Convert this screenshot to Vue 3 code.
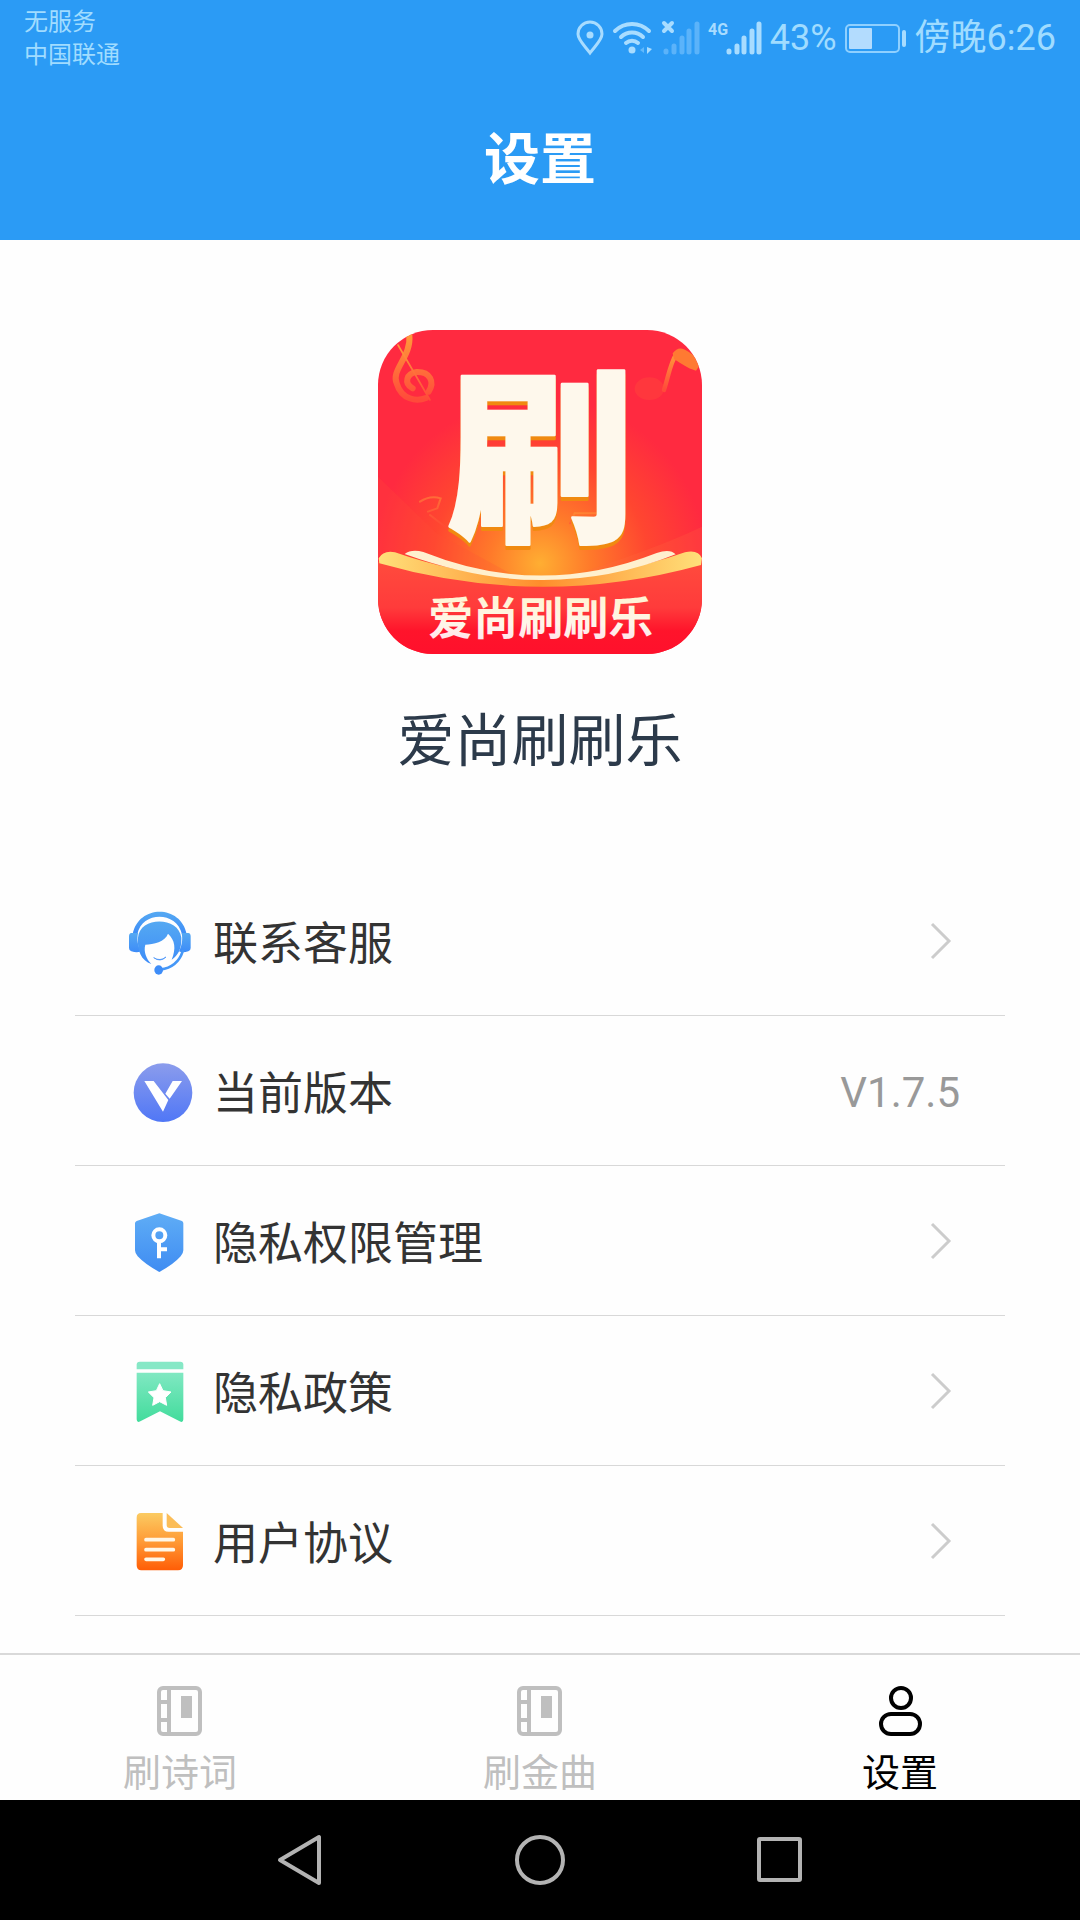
<script setup>
import { ref } from 'vue'

const menu = [
  { id: 'service', label: '联系客服' },
  { id: 'version', label: '当前版本', value: 'V1.7.5' },
  { id: 'permission', label: '隐私权限管理' },
  { id: 'privacy', label: '隐私政策' },
  { id: 'terms', label: '用户协议' }
]

const tabs = [
  { id: 'poem', label: '刷诗词', icon: 'book' },
  { id: 'song', label: '刷金曲', icon: 'book' },
  { id: 'settings', label: '设置', icon: 'user' }
]

const current = ref('settings')
</script>

<template>
  <div class="page">
    <header class="header">
      <div class="status">
        <div class="carrier">
          <span>无服务</span>
          <span>中国联通</span>
        </div>
        <div class="indicators">
          <svg width="28" height="36" viewBox="0 0 28 36" fill="none" aria-hidden="true">
            <path d="M14 33C9 26 2 20 2 14a12 12 0 0 1 24 0c0 6-7 12-12 19Z" stroke="#a8dcff" stroke-width="3" />
            <circle cx="14" cy="15" r="3.5" fill="#a8dcff" />
          </svg>
          <svg width="42" height="36" viewBox="0 0 42 36" fill="none" aria-hidden="true">
            <g stroke="#a8dcff" stroke-width="4" stroke-linecap="round">
              <path d="M3 11a24 24 0 0 1 34 0" />
              <path d="M9 17a16 16 0 0 1 22 0" />
              <path d="M14 23a9 9 0 0 1 12 0" />
            </g>
            <circle cx="20" cy="30" r="3.5" fill="#a8dcff" />
            <path d="M35 27l5 2-5 5Z" fill="#a8dcff" />
            <path d="M32 27v6l-4-3Z" fill="#62b9fb" />
          </svg>
          <svg width="38" height="36" viewBox="0 0 38 36" fill="none" aria-hidden="true">
            <path d="M2 3l8 8m0-8l-8 8" stroke="#a8dcff" stroke-width="4" stroke-linecap="round" />
            <g stroke="#5bb3fa" stroke-width="5" stroke-linecap="round">
              <path d="M4 31v1M12 26v6M20 18v14M27 11v21M35 4v28" />
            </g>
          </svg>
          <svg width="54" height="36" viewBox="0 0 54 36" fill="none" aria-hidden="true">
            <text class="net" x="0" y="15">4G</text>
            <g stroke="#a8dcff" stroke-width="5" stroke-linecap="round">
              <path d="M21 31v1M29 26v6M36 18v14M44 11v21M51 4v28" />
            </g>
          </svg>
          <span>43%</span>
          <svg width="62" height="36" viewBox="0 0 62 36" fill="none" aria-hidden="true">
            <rect x="1" y="5" width="53" height="27" rx="4" stroke="#8fd0ff" stroke-width="2" />
            <rect x="4" y="8" width="23" height="21" rx="1" fill="#b3dcfe" />
            <rect x="57" y="10" width="4" height="17" rx="2" fill="#a8dcff" />
          </svg>
          <span>傍晚6:26</span>
        </div>
      </div>
      <h1 class="title">设置</h1>
    </header>

    <main class="main">
      <svg class="logo" viewBox="24 30 972 972" role="img" aria-label="爱尚刷刷乐">
        <defs>
          <clipPath id="tile"><rect x="24" y="30" width="972" height="972" rx="165" /></clipPath>
          <radialGradient id="glow" gradientUnits="userSpaceOnUse" cx="510" cy="730" r="500">
            <stop offset="0" stop-color="#ffae32" />
            <stop offset=".3" stop-color="#ff7a2a" />
            <stop offset=".65" stop-color="#ff4630" />
            <stop offset="1" stop-color="#ff2a40" />
          </radialGradient>
          <linearGradient id="base" x1="0" y1="0" x2="0" y2="1">
            <stop offset="0" stop-color="#ff4b3d" />
            <stop offset=".5" stop-color="#ff3b3b" />
            <stop offset=".75" stop-color="#ff142b" />
            <stop offset="1" stop-color="#ff102c" />
          </linearGradient>
          <linearGradient id="page" x1="0" x2="1">
            <stop offset="0" stop-color="#ffe07a" />
            <stop offset=".5" stop-color="#ff8d2c" />
            <stop offset="1" stop-color="#ffe07a" />
          </linearGradient>
          <linearGradient id="note" x1="0" y1="0" x2="0" y2="1">
            <stop offset="0" stop-color="#ff9a3a" />
            <stop offset="1" stop-color="#ff4a3a" />
          </linearGradient>
          <linearGradient id="cream" x1="0" y1="0" x2="0" y2="1">
            <stop offset="0" stop-color="#fff3cf" />
            <stop offset=".6" stop-color="#fff6ea" />
            <stop offset="1" stop-color="#ffdcec" />
          </linearGradient>
        </defs>
        <g clip-path="url(#tile)">
          <rect x="24" y="30" width="972" height="972" fill="url(#glow)" />
          <path d="M24 470L200 640 420 760H24Z" fill="#ff5038" opacity=".2" />
          <path d="M996 620Q850 690 590 770H996Z" fill="#ff7040" opacity=".2" />
          <g fill="none" stroke="url(#note)" stroke-linecap="round">
            <path d="M118 45C125 110 62 150 80 190 95 240 140 245 168 234M128 205C100 190 110 160 140 156 180 155 195 185 176 215" stroke-width="18" />
            <path d="M84 75L180 240" stroke-width="5" />
            <path d="M882 210C895 170 900 130 920 100" stroke-width="13" />
            <path d="M150 545q30-20 62-10l-10 30-28 10M180 585l45 35" stroke-width="6" opacity=".5" />
            <path d="M600 610l14-30h70" stroke-width="6" opacity=".5" />
          </g>
          <path d="M908 100C930 70 950 90 996 125L978 152C950 145 935 130 912 118Z" fill="#ff7a32" />
          <ellipse cx="838" cy="206" rx="44" ry="34" fill="#ff503a" opacity=".35" />
          <path d="M24 725Q510 865 996 725V1002H24Z" fill="url(#base)" />
          <path d="M26 715Q40 690 75 697Q510 850 945 697Q985 688 996 715L993 735Q510 868 28 730Z" fill="url(#page)" />
          <path d="M104 702Q125 686 160 696Q510 836 860 699Q900 685 917 703Q720 782 510 780Q320 780 104 702Z" fill="#fff0cf" />
          <text class="mark" x="512" y="622" text-anchor="middle">刷</text>
          <text class="brand" x="512" y="944" text-anchor="middle" fill="url(#cream)">爱尚刷刷乐</text>
        </g>
      </svg>
      <h2 class="name">爱尚刷刷乐</h2>

      <ul class="menu">
        <li v-for="item in menu" :key="item.id">
          <component :is="item.value ? 'div' : 'button'" class="row">
            <svg v-if="item.id === 'service'" class="icon" viewBox="198 78 204 204" aria-hidden="true">
              <defs>
                <linearGradient id="sky" x1="0" y1="0" x2="0" y2="1">
                  <stop offset="0" stop-color="#55a9f2" />
                  <stop offset="1" stop-color="#3d8cf8" />
                </linearGradient>
              </defs>
              <path d="M218 160C235 70 363 70 380 160L366 160C350 90 246 90 232 160Z" fill="url(#sky)" />
              <path d="M214 156h20c-4 22 0 38 8 55q-10 6-28 0q-7-2-7-10v-35q0-9 7-10ZM385 156h-20c4 22 0 38-8 55q10 6 28 0q7-2 7-10v-35q0-9-7-10Z" fill="url(#sky)" />
              <path d="M234 170C238 105 357 105 364 170C365 205 354 222 335 236C349 202 345 177 324 158C316 182 280 190 256 191C250 211 259 234 274 249C244 238 231 210 234 170Z" fill="url(#sky)" />
              <path d="M281 230q19 12 37-2q-17 17-37 2Z" fill="#3d8cf8" stroke="#3d8cf8" stroke-width="2" />
              <path d="M368 211Q353 258 301 266" fill="none" stroke="#4597f7" stroke-width="8" stroke-linecap="round" />
              <ellipse cx="296" cy="267" rx="13" ry="14" fill="#3e8df8" />
            </svg>
            <svg v-else-if="item.id === 'version'" class="icon" viewBox="198 528 204 204" aria-hidden="true">
              <defs>
                <linearGradient id="violet" x1="0" y1="0" x2="0" y2="1">
                  <stop offset="0" stop-color="#8b9cec" />
                  <stop offset="1" stop-color="#5077f6" />
                </linearGradient>
              </defs>
              <circle cx="309" cy="635" r="88" fill="url(#violet)" />
              <path d="M253 600h28l44 57-16 35ZM338 600h28l-37 53-13-15Z" fill="#fff" />
            </svg>
            <svg v-else-if="item.id === 'permission'" class="icon" viewBox="198 48 204 204" aria-hidden="true">
              <defs>
                <linearGradient id="azure" x1="0" y1="0" x2="0" y2="1">
                  <stop offset="0" stop-color="#5fadf6" />
                  <stop offset="1" stop-color="#3f8cf2" />
                </linearGradient>
              </defs>
              <path d="M298 67L366 90Q370 92 370 97V178Q370 187 362 196Q341 220 298 243Q255 220 233 196Q225 187 225 178V97Q225 92 230 90Z" fill="url(#azure)" />
              <g fill="none" stroke="#fff" stroke-width="12">
                <circle cx="298" cy="133" r="18" />
                <path d="M297 152v50M297 175h24" />
              </g>
            </svg>
            <svg v-else-if="item.id === 'privacy'" class="icon" viewBox="198 498 204 204" aria-hidden="true">
              <defs>
                <linearGradient id="mint" x1="0" y1="0" x2="0" y2="1">
                  <stop offset="0" stop-color="#80e8c2" />
                  <stop offset="1" stop-color="#42dc9c" />
                </linearGradient>
              </defs>
              <path d="M230 535v-14q0-9 9-9h122q9 0 9 9v14Z" fill="#86e8c6" />
              <path d="M230 545h140v140q0 12-11 6l-59-30-59 30q-11 6-11-6Z" fill="url(#mint)" />
              <path d="M299 578l10 21 24 4-17 17 4 23-21-11-21 11 4-23-17-17 24-4Z" fill="#fff" stroke="#fff" stroke-width="3" stroke-linejoin="round" />
            </svg>
            <svg v-else class="icon" viewBox="198 168 204 204" aria-hidden="true">
              <defs>
                <linearGradient id="amber" x1="0" y1="0" x2="0" y2="1">
                  <stop offset="0" stop-color="#fbcb62" />
                  <stop offset=".5" stop-color="#ff9a35" />
                  <stop offset="1" stop-color="#ff5d06" />
                </linearGradient>
              </defs>
              <path d="M243 186h65v38q0 18 18 18h43v101q0 15-15 15H244q-14 0-14-15V200q0-14 13-14Z" fill="url(#amber)" />
              <path d="M320 186l49 45h-40q-9 0-9-9Z" fill="#fbbd58" />
              <path d="M258 266h82M258 296h82M258 325h52" stroke="#fff6e6" stroke-width="11" stroke-linecap="round" />
            </svg>
            <span class="label">{{ item.label }}</span>
            <span v-if="item.value" class="value">{{ item.value }}</span>
            <svg v-else class="chevron" width="22" height="38" viewBox="0 0 22 38" fill="none" aria-hidden="true">
              <path d="M2 2l17 17-17 17" stroke="#ccc" stroke-width="3" />
            </svg>
          </component>
        </li>
      </ul>
    </main>

    <nav class="tabs">
      <a
        v-for="tab in tabs"
        :key="tab.id"
        :href="'#' + tab.id"
        class="tab"
        :class="{ active: current === tab.id }"
        @click.prevent="current = tab.id"
      >
        <svg v-if="tab.icon === 'book'" width="46" height="50" viewBox="0 0 46 50" fill="none" stroke="currentColor" stroke-width="4" aria-hidden="true">
          <rect x="2" y="2" width="41" height="46" rx="4" />
          <path d="M12 2v46M2 16h10M2 34h10" />
          <path d="M24 10h11v22H24Z" fill="currentColor" stroke="none" />
        </svg>
        <svg v-else width="46" height="50" viewBox="0 0 46 50" fill="none" stroke="currentColor" stroke-width="4" aria-hidden="true">
          <circle cx="24" cy="12" r="10" />
          <rect x="4" y="28" width="39" height="20" rx="10" />
        </svg>
        <span>{{ tab.label }}</span>
      </a>
    </nav>

    <div class="system">
      <button aria-label="返回">
        <svg width="50" height="54" viewBox="0 0 50 54"><path d="M44 4v46L5 27Z" /></svg>
      </button>
      <button aria-label="主页">
        <svg width="54" height="54" viewBox="0 0 54 54"><circle cx="27" cy="27" r="23" /></svg>
      </button>
      <button aria-label="最近任务">
        <svg width="50" height="54" viewBox="0 0 50 54"><rect x="4" y="6" width="41" height="41" rx="1" /></svg>
      </button>
    </div>
  </div>
</template>

<style>
body {
  margin: 0;
}
</style>

<style scoped>
.page {
  display: flex;
  flex-direction: column;
  min-height: 100vh;
  background: #fefefe;
  font-family: Roboto, "Noto Sans CJK SC", sans-serif;
}

button {
  padding: 0;
  border: 0;
  background: none;
  font: inherit;
  cursor: pointer;
}

.header {
  height: 240px;
  background: #2b9bf5;
}

.status {
  display: flex;
  justify-content: space-between;
  align-items: flex-start;
  padding: 6px 24px 0;
  color: #a0dcff;
}

.carrier {
  display: flex;
  flex-direction: column;
  font-size: 24px;
  line-height: 33px;
}

.indicators {
  display: flex;
  align-items: center;
  gap: 8px;
  padding-top: 8px;
  font-size: 36px;
  line-height: 48px;
}

.indicators svg {
  overflow: visible;
}

.net {
  fill: #a8dcff;
  font-size: 16px;
  font-weight: 700;
}

.title {
  margin: 48px 0 0;
  color: #fff;
  font-size: 56px;
  font-weight: 700;
  line-height: 80px;
  text-align: center;
}

.main {
  display: flex;
  flex: 1;
  flex-direction: column;
  align-items: center;
  padding-top: 90px;
}

.logo {
  width: 324px;
  height: 324px;
}

.mark {
  fill: #fef8ec;
  stroke: #fef8ec;
  stroke-width: 8px;
  stroke-linejoin: round;
  font-size: 560px;
  font-weight: 900;
  filter: drop-shadow(0 12px 0 #f08a10);
}

.brand {
  font-size: 135px;
  font-weight: 700;
}

.name {
  margin: 48px 0 0;
  color: #2c3a4a;
  font-size: 57px;
  font-weight: 400;
  line-height: 80px;
}

.menu {
  align-self: stretch;
  margin: 84px 75px 0;
  padding: 0;
  list-style: none;
}

.row {
  display: flex;
  align-items: center;
  box-sizing: border-box;
  width: 100%;
  height: 150px;
  padding: 0 45px 0 51px;
  border-bottom: 1px solid #d8d8d8;
  color: #333;
  font-size: 45px;
  text-align: left;
}

.icon {
  width: 68px;
  height: 68px;
  margin-right: 19px;
}

.label {
  flex: 1;
}

.value {
  padding-top: 4px;
  color: #999;
  font-size: 42px;
}

.chevron {
  margin-right: 8px;
}

.tabs {
  display: flex;
  border-top: 2px solid #d9d9d9;
}

.tab {
  display: flex;
  flex: 1;
  flex-direction: column;
  align-items: center;
  gap: 12px;
  padding: 31px 0 2px;
  color: #bfbfbf;
  font-size: 38px;
  line-height: 50px;
  text-decoration: none;
}

.tab.active {
  color: #000;
}

.system {
  display: flex;
  justify-content: center;
  height: 120px;
  background: #000;
}

.system button {
  display: flex;
  flex: 0 1 240px;
  align-items: center;
  justify-content: center;
}

.system svg {
  fill: none;
  stroke: #b3b3b3;
  stroke-width: 4px;
  stroke-linejoin: round;
}
</style>
